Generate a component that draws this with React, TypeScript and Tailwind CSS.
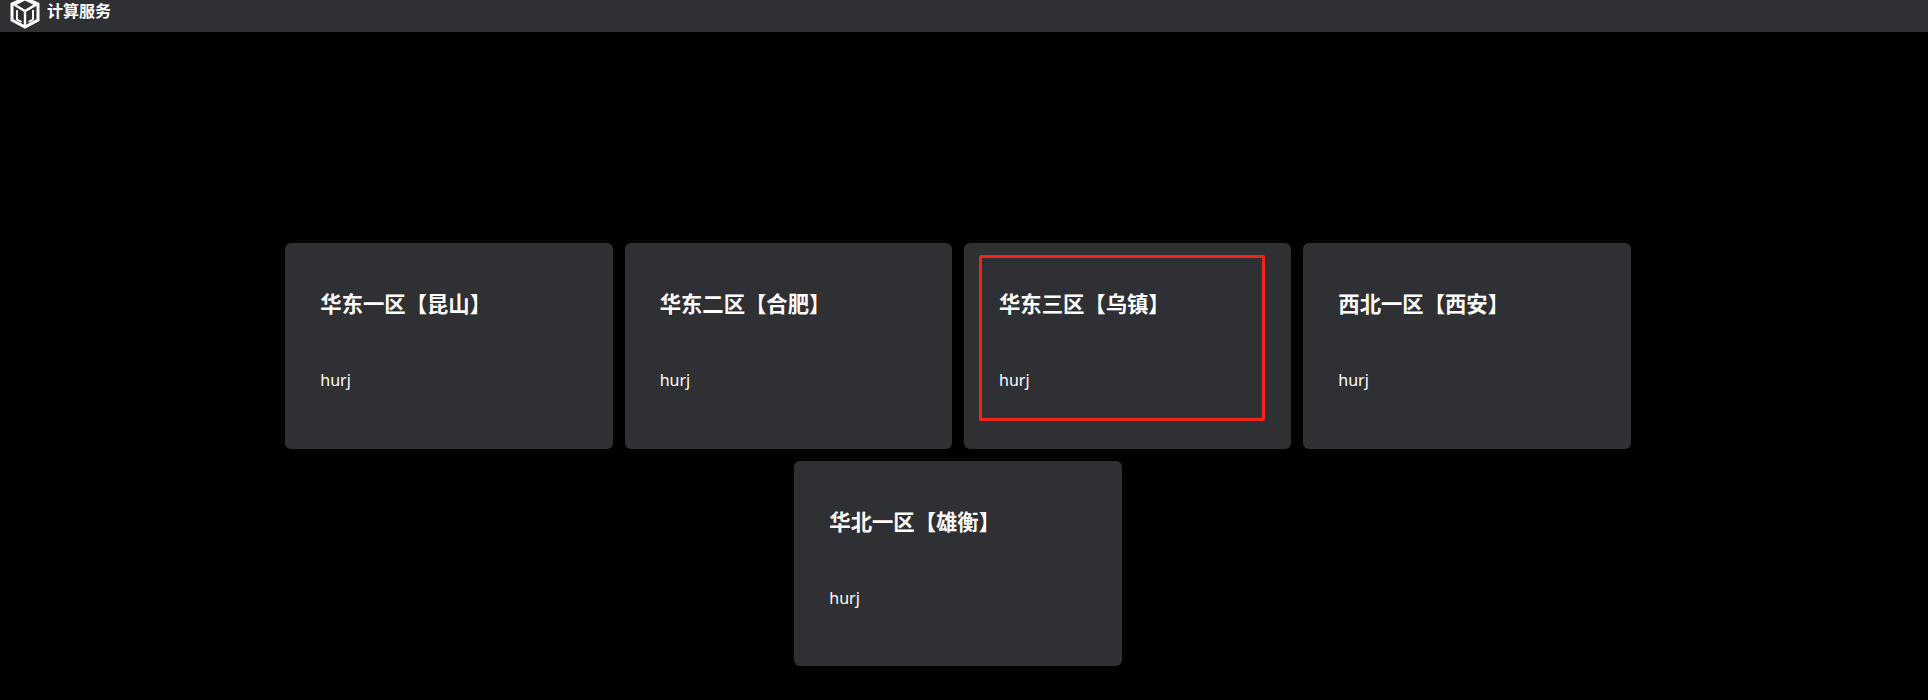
import { ReactNode } from 'react';

const regions = [
  '华东一区【昆山】',
  '华东二区【合肥】',
  '华东三区【乌镇】',
  '西北一区【西安】',
  '华北一区【雄衡】',
];

function CubeLogo() {
  return (
    <svg viewBox="0 0 30 32" className="h-[32px] w-[30px] overflow-visible" fill="none" stroke="white" strokeWidth="3" strokeLinejoin="miter">
      <path d="M15 -2 L28 4 V20 L15 27 L2 20 V4 Z" />
      <path d="M4 4.5 L15 11 L26 4.5 L15 -1 Z" strokeWidth="2.6" />
      <path d="M15 11 V27" strokeWidth="2.4" />
      <path d="M7 10 V19.5 L11.5 22" strokeWidth="2" />
      <path d="M23 10 V19.5 L18.5 22" strokeWidth="2" />
    </svg>
  );
}

function RegionCard({ name, children }: { name: string; children?: ReactNode }) {
  return (
    <div className="relative h-[205.67px] w-[327.33px] rounded-md bg-[#2f3034] pl-[35px] pt-[47px] text-white">
      {children}
      <div className="text-[21.33px] leading-[28px] font-bold whitespace-nowrap">{name}</div>
      <div className="mt-[50px] text-[16px] leading-[24px]">hurj</div>
    </div>
  );
}

export default function App() {
  return (
    <div className="min-h-[700px] bg-black font-['Noto_Sans','Noto_Sans_CJK_SC',sans-serif]">
      <header className="flex h-[32px] items-center overflow-hidden bg-[#2f3034] pl-[10px] text-white">
        <CubeLogo />
        <span className="mb-[11px] ml-[7px] text-[16px] leading-[16px] font-semibold">计算服务</span>
      </header>
      <main className="flex w-[1916px] flex-wrap justify-center gap-x-[12px] gap-y-[12px] px-[280px] pt-[211px]">
        {regions.map((name, i) => (
          <RegionCard key={name} name={name}>
            {i === 2 && (
              <div className="absolute top-[12px] left-[15px] h-[166px] w-[286px] rounded-[2px] border-[3px] border-[#f5221b]" />
            )}
          </RegionCard>
        ))}
      </main>
    </div>
  );
}
